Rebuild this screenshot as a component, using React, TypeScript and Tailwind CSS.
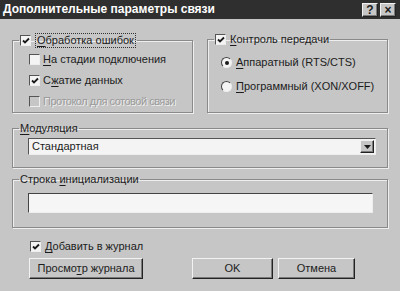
import React from 'react';

function Bevel({ children, className = '' }: { children?: React.ReactNode; className?: string }) {
  return (
    <div
      className={`border border-t-[#f2f2f2] border-l-[#f2f2f2] border-r-[#222] border-b-[#222] shadow-[inset_-1px_-1px_0_#7a7a7a] ${className}`}
    >
      {children}
    </div>
  );
}

function CheckBox({ checked, disabled }: { checked?: boolean; disabled?: boolean }) {
  return (
    <span
      className={`inline-flex items-center justify-center w-[11px] h-[11px] shrink-0 border border-t-[#555] border-l-[#555] border-r-[#eee] border-b-[#eee] ${
        disabled ? 'bg-[#c6c6c6]' : 'bg-[#f4f4f4]'
      }`}
    >
      {checked && (
        <svg width="8" height="8" viewBox="0 0 8 8">
          <path d="M1 3.5 L3 5.5 L7 1.5" stroke="#1a1a1a" strokeWidth="1.8" fill="none" />
        </svg>
      )}
    </span>
  );
}

function Radio({ checked }: { checked?: boolean }) {
  return (
    <span className="inline-flex items-center justify-center w-[11px] h-[11px] shrink-0 rounded-full bg-[#f4f4f4] border border-t-[#444] border-l-[#444] border-r-[#eee] border-b-[#eee]">
      {checked && <span className="w-[4px] h-[4px] rounded-full bg-[#1a1a1a]" />}
    </span>
  );
}

function U({ children }: { children: React.ReactNode }) {
  return <span className="underline underline-offset-2">{children}</span>;
}

const group = 'border border-[#8a8a8a] shadow-[1px_1px_0_#eeeeee,inset_1px_1px_0_#eeeeee] m-0 min-w-0 px-[6px]';

export default function App() {
  return (
    <div
      className="w-[400px] h-[291px] bg-[#c6c6c6] text-[#1c1c1c] text-[11px] leading-[13px] overflow-hidden flex flex-col"
      style={{ fontFamily: '"Liberation Sans", Arial, sans-serif' }}
    >
      <div className="h-[19px] bg-[#2f2f2f] flex items-center justify-between pl-[3px] pr-[4px]">
        <span className="text-white font-bold text-[12px]">Дополнительные параметры связи</span>
        <div className="flex gap-[2px]">
          <Bevel className="w-[16px] h-[14px] bg-[#c6c6c6] flex items-center justify-center font-bold text-[12px] leading-none">
            ?
          </Bevel>
          <Bevel className="w-[16px] h-[14px] bg-[#c6c6c6] flex items-center justify-center font-bold text-[12px] leading-none">
            ×
          </Bevel>
        </div>
      </div>

      <div className="flex flex-col px-[12px] pt-[14px]">
        <div className="flex gap-[14px]">
          <fieldset className={`${group} w-[181px] h-[80px]`}>
            <legend className="flex items-center gap-[4px] px-[1px]">
              <CheckBox checked />
              <span className="border border-dotted border-[#333] px-[1px]">
                <U>О</U>бработка ошибок
              </span>
            </legend>
            <div className="flex flex-col gap-[8px] pt-[5px] pl-[10px]">
              <div className="flex items-center gap-[3px]">
                <CheckBox />
                <span>
                  <U>Н</U>а стадии подключения
                </span>
              </div>
              <div className="flex items-center gap-[3px]">
                <CheckBox checked />
                <span>
                  С<U>ж</U>атие данных
                </span>
              </div>
              <div className="flex items-center gap-[3px]">
                <CheckBox disabled />
                <span className="text-[#9a9a9a] [text-shadow:1px_1px_0_#f0f0f0] tracking-[-0.5px]">
                  Протокол для сотовой связи
                </span>
              </div>
            </div>
          </fieldset>

          <fieldset className={`${group} w-[181px] h-[80px]`}>
            <legend className="flex items-center gap-[4px] px-[1px]">
              <CheckBox checked />
              <span>
                <U>К</U>онтроль передачи
              </span>
            </legend>
            <div className="flex flex-col gap-[11px] pt-[10px] pl-[7px]">
              <div className="flex items-center gap-[4px]">
                <Radio checked />
                <span>
                  <U>А</U>ппаратный (RTS/CTS)
                </span>
              </div>
              <div className="flex items-center gap-[4px]">
                <Radio />
                <span>
                  <U>П</U>рограммный (XON/XOFF)
                </span>
              </div>
            </div>
          </fieldset>
        </div>

        <fieldset className={`${group} mt-[9px] h-[46px]`}>
          <legend className="px-[1px]">
            <U>М</U>одуляция
          </legend>
          <div className="mt-[3px] ml-[9px] mr-[5px] h-[17px] bg-[#f4f4f4] border border-t-[#555] border-l-[#555] border-r-[#eee] border-b-[#eee] flex items-center justify-between pl-[3px] pr-[1px]">
            <span>Стандартная</span>
            <Bevel className="w-[14px] h-[13px] bg-[#c6c6c6] flex items-center justify-center">
              <svg width="7" height="4" viewBox="0 0 7 4">
                <path d="M0 0 H7 L3.5 4 Z" fill="#1a1a1a" />
              </svg>
            </Bevel>
          </div>
        </fieldset>

        <fieldset className={`${group} mt-[5px] h-[55px]`}>
          <legend className="px-[1px]">
            Строка <U>и</U>нициализации
          </legend>
          <div className="mt-[7px] ml-[9px] mr-[8px] h-[20px] bg-[#f6f6f6] border border-t-[#444] border-l-[#444] border-r-[#eee] border-b-[#eee]" />
        </fieldset>

        <div className="flex items-center gap-[4px] mt-[12px] pl-[18px]">
          <CheckBox checked />
          <span>
            <U>Д</U>обавить в журнал
          </span>
        </div>

        <div className="flex mt-[5px] pl-[17px]">
          <Bevel className="w-[114px] h-[21px] bg-[#c6c6c6] flex items-center justify-center">
            <span>
              Просмо<U>т</U>р журнала
            </span>
          </Bevel>
          <Bevel className="ml-[49px] w-[81px] h-[21px] bg-[#c6c6c6] flex items-center justify-center">
            OK
          </Bevel>
          <Bevel className="ml-[5px] w-[77px] h-[21px] bg-[#c6c6c6] flex items-center justify-center">
            Отмена
          </Bevel>
        </div>
      </div>
    </div>
  );
}
